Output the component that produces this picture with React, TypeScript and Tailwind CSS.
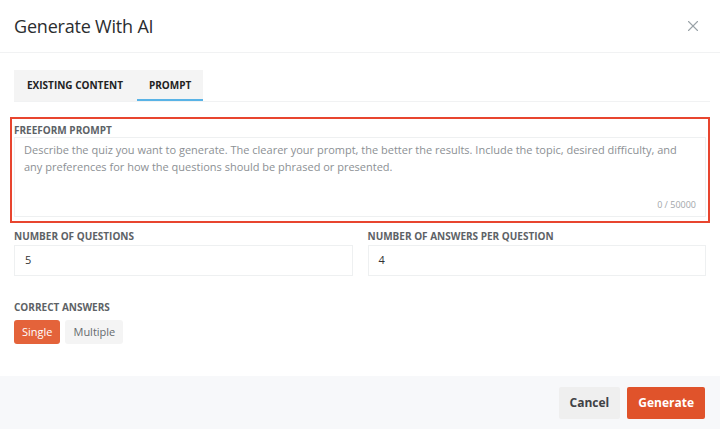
import { X } from "lucide-react";

export default function App() {
  const font = { fontFamily: '"Open Sans", sans-serif' };
  return (
    <div className="w-[720px] h-[429px] bg-white flex flex-col" style={font}>
      <header className="h-[53px] shrink-0 flex items-center justify-between pl-[14px] pr-[18px] border-b border-[#f1f2f3]">
        <h1 className="text-[18px] text-[#2b2d2f] tracking-[-0.2px]">Generate With AI</h1>
        <X className="w-[18px] h-[18px] text-[#9aa3a8]" strokeWidth={1.5} />
      </header>

      <div className="flex-1 flex flex-col px-[14px] pt-[17px]">
        <div className="flex border-b border-[#f1f2f3] mr-[-4px]">
          <div className="flex bg-[#f4f4f4] h-[31px]">
            <button className="pl-[13px] pr-[14px] text-[10px] font-bold text-[#222] uppercase">Existing Content</button>
            <button className="px-[12px] text-[10px] font-bold text-[#222] uppercase border-b-2 border-[#59b3e6] pt-[2px]">Prompt</button>
          </div>
        </div>

        <div className="mt-[15px] mx-[-4px] border-2 border-[#e8452f] px-[2px] pt-[4px] pb-[4px]">
          <div className="text-[10px] font-bold text-[#5d6266] uppercase h-[14px] leading-[14px]">Freeform Prompt</div>
          <div className="border border-[#eef0f1] h-[80px] flex flex-col justify-between px-[9px] pt-[3px] pb-[5px]">
            <p className="text-[11px] leading-[17px] text-[#8c9094]">
              Describe the quiz you want to generate. The clearer your prompt, the better the results. Include the topic, desired difficulty, and any preferences for how the questions should be phrased or presented.
            </p>
            <div className="text-right text-[9px] text-[#a2a6a9]">0 / 50000</div>
          </div>
        </div>

        <div className="grid grid-cols-2 gap-[15px] mt-[6px]">
          <div className="flex flex-col">
            <label className="text-[10px] font-bold text-[#5d6266] uppercase h-[14px] leading-[14px] mb-[2px]">Number of Questions</label>
            <div className="h-[31px] border border-[#eef0f1] flex items-center px-[10px] text-[11px] text-[#333]">5</div>
          </div>
          <div className="flex flex-col">
            <label className="text-[10px] font-bold text-[#5d6266] uppercase h-[14px] leading-[14px] mb-[2px]">Number of Answers per Question</label>
            <div className="h-[31px] border border-[#eef0f1] flex items-center px-[10px] text-[11px] text-[#333]">4</div>
          </div>
        </div>

        <div className="mt-[24px] text-[10px] font-bold text-[#5d6266] uppercase h-[14px] leading-[14px]">Correct Answers</div>
        <div className="flex gap-[5px] mt-[6px]">
          <button className="h-[24px] px-[8px] rounded-[3px] bg-[#e4633a] text-white text-[11px]">Single</button>
          <button className="h-[24px] px-[8px] rounded-[3px] bg-[#f4f4f4] text-[#666b6f] text-[11px]">Multiple</button>
        </div>
      </div>

      <footer className="h-[53px] shrink-0 bg-[#f7f8fa] flex items-center justify-end gap-[7px] pr-[15px]">
        <button className="h-[32px] px-[11px] rounded-[2px] bg-[#efefef] text-[#3f4245] text-[12px] font-bold">Cancel</button>
        <button className="h-[32px] px-[11px] rounded-[2px] bg-[#e0532b] text-white text-[12px] font-bold">Generate</button>
      </footer>
    </div>
  );
}
